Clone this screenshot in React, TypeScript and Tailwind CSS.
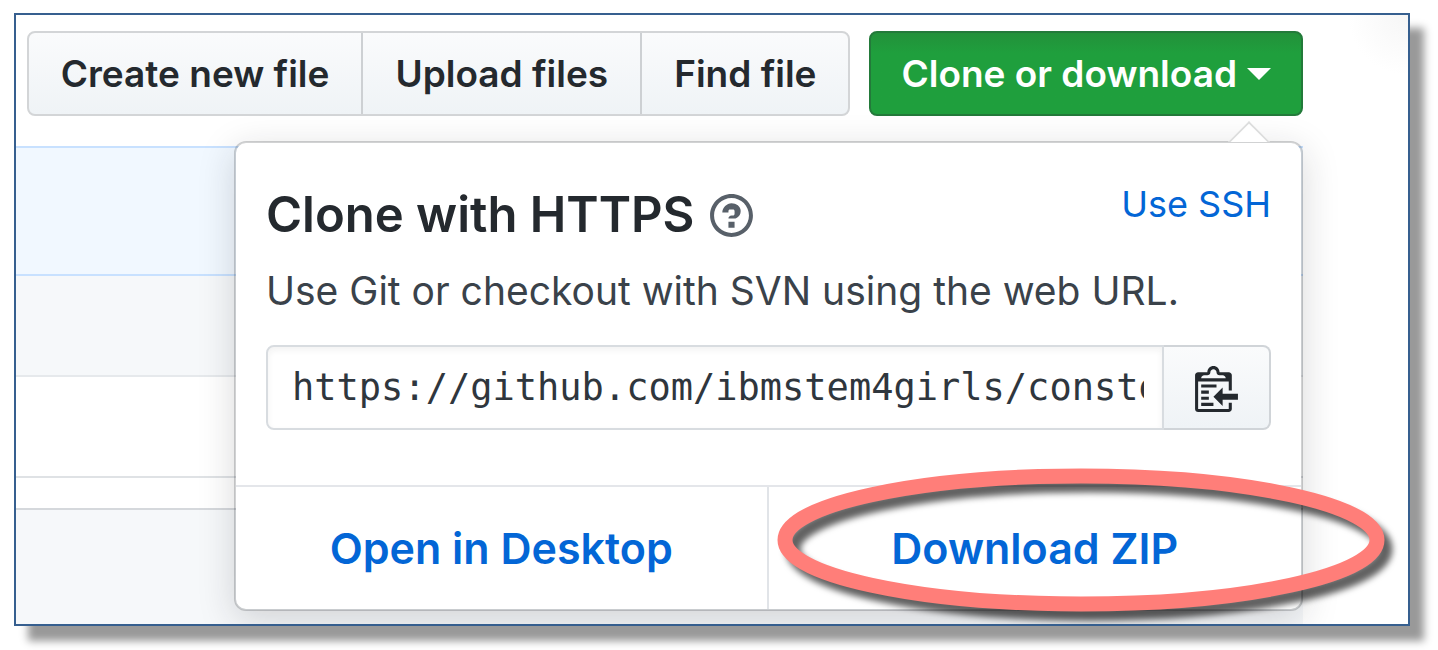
import React from "react";

const URL_TEXT = "https://github.com/ibmstem4girls/constellations.git";

function QuestionIcon() {
  return (
    <svg viewBox="0 0 14 16" className="h-[49px] w-[43px] fill-[#586069]" aria-hidden="true">
      <path d="M6 10h2v2H6v-2zm4-3.5C10 8.64 8 9 8 9H6c0-.55.45-1 1-1h.5c.28 0 .5-.22.5-.5v-1c0-.28-.22-.5-.5-.5h-1c-.28 0-.5.22-.5.5V7H4c0-1.5 1.5-3 3-3s3 1 3 2.5zM7 2.3c3.14 0 5.7 2.56 5.7 5.7s-2.56 5.7-5.7 5.7A5.71 5.71 0 0 1 1.3 8c0-3.14 2.56-5.7 5.7-5.7zM7 1C3.14 1 0 4.14 0 8s3.14 7 7 7 7-3.14 7-7-3.14-7-7-7z" />
    </svg>
  );
}

function ClippyIcon() {
  return (
    <svg viewBox="0 0 14 16" className="h-[49px] w-[43px] fill-[#24292e]" aria-hidden="true">
      <path d="M2 13h4v1H2v-1zm5-6H2v1h5V7zm2 3V8l-3 3 3 3v-2h5v-2H9zM4.5 9H2v1h2.5V9zM2 12h2.5v-1H2v1zm9 1h1v2c-.02.28-.11.52-.3.7-.19.18-.42.28-.7.3H1c-.55 0-1-.45-1-1V4c0-.55.45-1 1-1h3c0-1.11.89-2 2-2 1.11 0 2 .89 2 2h3c.55 0 1 .45 1 1v5h-1V6H1v9h10v-2zM2 5h8c0-.55-.45-1-1-1H8c-.55 0-1-.45-1-1s-.45-1-1-1-1 .45-1 1-.45 1-1 1H3c-.55 0-1 .45-1 1z" />
    </svg>
  );
}

function Toolbar() {
  return (
    <div className="flex justify-end gap-[19px] text-[37px] leading-[81px] font-semibold whitespace-nowrap">
      <div className="flex divide-x-2 divide-[#cdd0d3] rounded-lg border-2 border-[#d3d5d7] bg-linear-to-b from-[#fafbfc] to-[#eff3f6] text-[#24292e]">
        <button type="button" className="px-8">Create new file</button>
        <button type="button" className="px-8">Upload files</button>
        <button type="button" className="px-8">Find file</button>
      </div>
      <button
        type="button"
        className="flex items-center gap-2.5 rounded-lg border-2 border-[#237a3a] bg-[#1f9f3d] bg-linear-to-b from-[#22913a] to-[#1f9f3d] to-25% px-[30px] text-white"
      >
        Clone or download
        <svg viewBox="0 0 24 12" className="h-3 w-6 fill-white" aria-hidden="true">
          <path d="M0 0h24L12 12z" />
        </svg>
      </button>
    </div>
  );
}

function ClonePopover() {
  return (
    <section className="absolute -top-[5px] right-0 left-[218px] rounded-xl border-2 border-[#1b1f23]/20 bg-white bg-clip-padding shadow-[0_9px_36px_rgba(27,31,35,0.17)]">
      <div className="absolute -top-4 right-[37px] size-[30px] rotate-45 border-t-2 border-l-2 border-[#dcdddd] bg-white [clip-path:polygon(0_0,100%_0,0_100%)]" />
      <div className="px-[30px] pt-[38px]">
        <div className="flex items-start justify-between">
          <div className="flex items-center gap-4">
            <h2 className="text-[49px] leading-[68px] font-semibold text-[#24292e]">Clone with HTTPS</h2>
            <a href="#help" aria-label="Which remote URL should I use?">
              <QuestionIcon />
            </a>
          </div>
          <a href="#ssh" className="text-[36px] leading-[46px] text-[#0366d6]">Use SSH</a>
        </div>
        <p className="pt-3 text-[39px] leading-[60px] whitespace-nowrap text-[#3a424a]">
          Use Git or checkout with SVN using the web URL.
        </p>
        <div className="mt-6 flex h-[85px]">
          <input
            type="text"
            readOnly
            aria-label="Clone this repository at"
            defaultValue={URL_TEXT}
            className="min-w-0 flex-1 rounded-l-lg border-2 border-[#d8dce0] bg-white pr-[18px] pl-6 font-['DejaVu_Sans_Mono',monospace] text-[37px] text-[#2f363d] shadow-[inset_0_3px_6px_rgba(27,31,35,0.06)] outline-none"
          />
          <button
            type="button"
            aria-label="Copy to clipboard"
            className="flex w-[107px] items-center justify-center rounded-r-lg border-2 border-l-0 border-[#d0d4d8] bg-linear-to-b from-[#fafbfc] to-[#eff3f6]"
          >
            <ClippyIcon />
          </button>
        </div>
      </div>
      <div className="mt-[55px] grid grid-cols-2 divide-x-2 divide-[#e1e4e8] border-t-2 border-[#e4e6ea] text-center text-[43px] leading-[122px] font-semibold text-[#0366d6]">
        <a href="#desktop">Open in Desktop</a>
        <a href="#zip">Download ZIP</a>
      </div>
      <svg
        viewBox="0 0 608 144"
        preserveAspectRatio="none"
        className="pointer-events-none absolute top-[325px] -right-[84px] h-36 w-[608px] overflow-visible drop-shadow-[8px_9px_3px_rgba(0,0,0,0.62)]"
        aria-hidden="true"
      >
        <ellipse cx="304" cy="72" rx="296" ry="64" fill="none" stroke="#ff7e79" strokeWidth="15" />
      </svg>
    </section>
  );
}

export default function App() {
  return (
    <main className="bg-white pt-[13px] pr-7 pb-6 pl-[14px] font-[Inter,sans-serif]">
      <div className="overflow-hidden border-2 border-[#365f8f] bg-white bg-[radial-gradient(circle_at_top_right,#f6f6f6,#ffffff_60px)] pt-4 shadow-[14px_15px_8px_#999]">
        <div className="mr-[105px]">
          <Toolbar />
          <div className="relative mt-[30px]">
            <div className="h-[130px] border-y-2 border-[#c8e1ff] bg-[#f1f8ff]" />
            <div className="h-[101px] border-b-2 border-[#e6e9ec] bg-[#f6f8fa]" />
            <div className="h-[101px] border-b-2 border-[#dfe2e5]" />
            <div className="h-8 border-b-2 border-[#d5d8dc]" />
            <div className="h-[114px] bg-[#f6f8fa]" />
            <ClonePopover />
          </div>
        </div>
      </div>
    </main>
  );
}
